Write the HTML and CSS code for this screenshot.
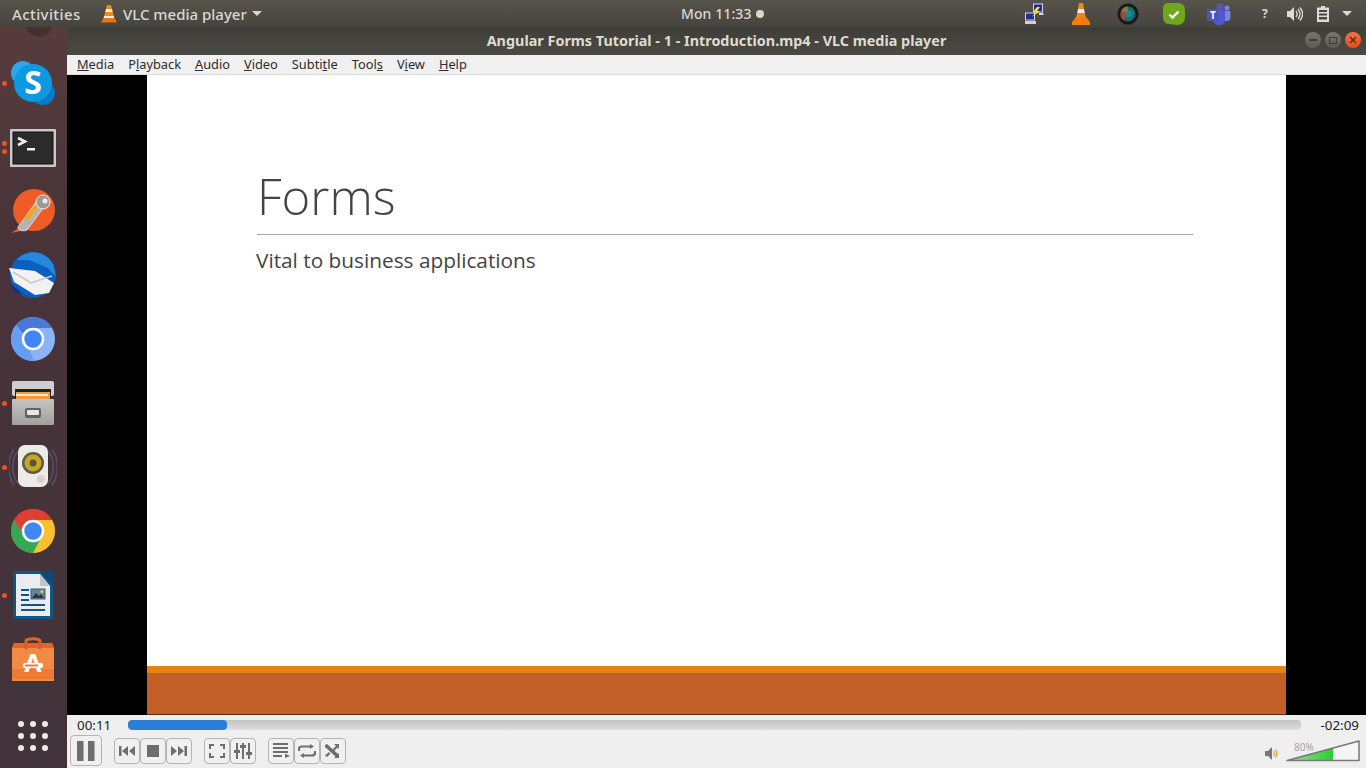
FILE: index.html
```html
<!DOCTYPE html>
<html>
<head>
<meta charset="utf-8">
<title>VLC media player</title>
<link rel="stylesheet" href="styles.css">
</head>

<body>
    <!-- gnome top bar -->
    <header class="topbar">
        <span class="activities">Activities</span>
        <div class="appmenu">
            <svg class="cone-small" width="18" height="20" viewBox="0 0 18 20">
                <path d="M7 1h4l1 4H6z" fill="#ee8a1a"/>
                <path d="M6 5h6l.8 3H5.200z" fill="#eee"/>
                <path d="M5.200 8h7.600l1 4H4.200z" fill="#ee8a1a"/>
                <path d="M4.200 12h9.600l.6 2H3.600z" fill="#eee"/>
                <path d="M3.500 14h11l2 3.500v1H1.500v-1z" fill="#e8750c"/>
            </svg>
            <span>VLC media player</span>
            <i class="caret"></i>
        </div>
        <div class="clock">Mon 11:33<i class="clock-dot"></i></div>
        <div class="tray">
            <svg class="tray-net" width="20" height="22" viewBox="0 0 20 22">
                <rect x="9.500" y="1" width="9" height="8" fill="#1c2fa0" stroke="#d8d8d8"/>
                <rect x="1.500" y="10" width="9" height="7" fill="#1c2fa0" stroke="#d8d8d8"/>
                <rect x="1" y="18" width="11" height="3" fill="#d0d0d0"/>
                <path d="M15 10h4.500v2H15z" fill="#d8d8d8"/>
                <path d="M13 4l-4 5h3l-4 5 8-6h-3l3-4z" fill="#f7ea1c"/>
            </svg>
            <svg class="tray-cone" width="20" height="24" viewBox="0 0 20 24">
                <path d="M8 1h4l1 6H7z" fill="#ee8a1a"/>
                <path d="M7 7h6l.8 4H6.200z" fill="#eee"/>
                <path d="M6.200 11h7.600l1 4H5.200z" fill="#ee8a1a"/>
                <path d="M5 15h10l4 5v3H1v-3z" fill="#ef7d10"/>
            </svg>
            <svg class="tray-lens" width="22" height="22" viewBox="0 0 22 22">
                <circle cx="11" cy="11" r="10.500" fill="#16181a"/>
                <circle cx="11" cy="11" r="7.500" fill="#1d6d63"/>
                <path d="M11 3.500a7.500 7.500 0 0 0-7 5l7 2.500z" fill="#8f7a2e"/>
                <path d="M4 8.500a7.500 7.500 0 0 0 3 9l4-7z" fill="#a8453a"/>
                <circle cx="12" cy="11" r="3.500" fill="#1787a0"/>
            </svg>
            <svg class="tray-check" width="22" height="22" viewBox="0 0 22 22">
                <path d="M6 0h9c5 0 7 3 7 8v6c0 5-3 8-8 8-3 0-5-1-8-1-4 0-6-3-6-7V6c0-4 2-6 6-6z" fill="#6fa81c"/>
                <path d="M6.500 11.500l3 3 6-6" fill="none" stroke="#fff" stroke-width="2.400"/>
            </svg>
            <svg class="tray-teams" width="24" height="22" viewBox="0 0 24 22">
                <circle cx="13" cy="3.500" r="3.500" fill="#5558af"/>
                <circle cx="20" cy="5" r="2.500" fill="#7b83eb"/>
                <path d="M16 8h7.500v7c0 2-2 3-3.500 3H16z" fill="#7b83eb"/>
                <path d="M6 7h12v10c0 3-2.500 5-6 5s-6-2-6-5z" fill="#5059c9"/>
                <rect x="0" y="6" width="12" height="12" rx="1" fill="#4b53bc"/>
                <text class="teams-t" x="6" y="15.500" text-anchor="middle">T</text>
            </svg>
            <span class="tray-help">?</span>
            <svg class="tray-sound" width="16" height="16" viewBox="0 0 16 16">
                <path d="M0 5h3l4-4v14l-4-4H0z" fill="#dcdcd8"/>
                <path d="M9 5c1.300 1.800 1.300 4.200 0 6M11 3c2.400 3 2.400 7 0 10M13 1.500c3.200 4 3.200 9 0 13" fill="none" stroke="#dcdcd8" stroke-width="1.300"/>
            </svg>
            <svg class="tray-batt" width="12" height="16" viewBox="0 0 12 16">
                <path d="M4 0h4v1.500h4V16H0V1.500h4z" fill="#dcdcd8"/>
                <path d="M2 4h8v2H2zM2 7.500h8v2H2zM2 11h8v2.500H2z" fill="#4a4842"/>
            </svg>
            <i class="caret"></i>
        </div>
    </header>

    <div class="desktop">
        <!-- launcher -->
        <nav class="dock">
            <div class="dock-peek"><i class="peek-shape"></i></div>

            <div class="dock-item running">
                <svg width="44" height="44" viewBox="0 0 44 44">
                    <circle cx="12" cy="12" r="12" fill="#2aa9e8"/>
                    <circle cx="32" cy="32" r="12" fill="#0a78c8"/>
                    <circle cx="22" cy="22" r="19" fill="#0d98e2"/>
                    <text class="skype-s" x="22" y="33" text-anchor="middle">S</text>
                </svg>
            </div>

            <div class="dock-item running two">
                <svg class="term-icon" width="46" height="38" viewBox="0 0 46 38">
                    <rect width="46" height="38" rx="1" fill="#c9c9c7"/>
                    <rect x="3" y="3" width="40" height="32" fill="#2b2b2b" stroke="#111"/>
                    <path d="M8 9l7 3.500L8 16" fill="none" stroke="#eee" stroke-width="2.600"/>
                    <rect x="17" y="19" width="8" height="2.500" fill="#eee"/>
                </svg>
            </div>

            <div class="dock-item">
                <svg width="44" height="44" viewBox="0 0 44 44">
                    <circle cx="23" cy="21" r="21" fill="#ef5b25"/>
                    <path d="M0 44l11-7 4 4z" fill="#ef5b25"/>
                    <path d="M7 38L25 13l8 5-17 23c-3 2-10 0-9-3z" fill="#b4b4b4" stroke="#f0e8e0" stroke-width=".8"/>
                    <path d="M13 29l13-15 3 2-12 15z" fill="#f3a51f"/>
                    <circle cx="32" cy="13" r="7" fill="#9a9a9a" stroke="#eee"/>
                    <circle cx="34" cy="12" r="2.500" fill="#eee"/>
                </svg>
            </div>

            <div class="dock-item">
                <svg width="48" height="48" viewBox="0 0 48 48">
                    <circle cx="24" cy="24" r="23" fill="#0a5fc0"/>
                    <path d="M8 9C16-1 34-3 44 13l3 13-8-9L20 9z" fill="#2488de"/>
                    <path d="M0 17l26 3 19 12-5 10-14 2L5 31z" fill="#f2f2f2"/>
                    <path d="M4 21l18 11 21-7" fill="none" stroke="#c8c8cc" stroke-width="1.500"/>
                    <path d="M2 33l13 11 12 3-21-6z" fill="#1c2a80"/>
                </svg>
            </div>

            <div class="dock-item">
                <svg width="44" height="44" viewBox="0 0 44 44">
                    <circle cx="22" cy="22" r="22" fill="#8ab4f8"/>
                    <path d="M22 0a22 22 0 0 1 19 11H22a11 11 0 0 0-10 6L5 8a22 22 0 0 1 17-8z" fill="#4a78d6"/>
                    <path d="M5 8l10 17 8 19A22 22 0 0 1 5 8z" fill="#669df6"/>
                    <circle cx="22" cy="22" r="10" fill="#4285f4" stroke="#fff" stroke-width="2.500"/>
                </svg>
            </div>

            <div class="dock-item running">
                <svg width="44" height="44" viewBox="0 0 44 44">
                    <defs>
                        <linearGradient id="drawerGrad" x1="0" x2="0" y1="0" y2="1">
                            <stop offset="0" stop-color="#c4c4c2"/>
                            <stop offset="1" stop-color="#a0a09e"/>
                        </linearGradient>
                    </defs>
                    <rect x="1" y="0" width="42" height="15" rx="2" fill="#cfcfcf"/>
                    <rect x="4" y="8" width="36" height="13" fill="#222"/>
                    <rect x="5" y="11" width="34" height="9" fill="#ec9b3e"/>
                    <rect x="5" y="13" width="32" height="2" fill="#fbe7c6"/>
                    <rect x="1" y="18" width="42" height="26" rx="1" fill="url(#drawerGrad)"/>
                    <rect x="14" y="27" width="16" height="10" rx="2" fill="#65625e"/>
                    <rect x="16" y="29" width="12" height="5" rx="1" fill="#e6e6e6"/>
                </svg>
            </div>

            <div class="dock-item running">
                <svg width="48" height="44" viewBox="0 0 48 44">
                    <path d="M9 6C2 14 2 30 9 38M5 4c-7 10-7 26 0 36M39 6c7 8 7 24 0 32M43 4c7 10 7 26 0 36" fill="none" stroke="#5a5068" stroke-width="1.500"/>
                    <rect x="9" y="0" width="30" height="42" rx="7" fill="#ecebe6"/>
                    <circle cx="24" cy="18" r="11" fill="#5b5a52"/>
                    <circle cx="24" cy="18" r="8.500" fill="#c8a818"/>
                    <circle cx="24" cy="18" r="3.500" fill="#55534a"/>
                    <circle cx="32" cy="34" r="4" fill="#d4d3ce"/>
                </svg>
            </div>

            <div class="dock-item">
                <svg width="44" height="44" viewBox="0 0 44 44">
                    <circle cx="22" cy="22" r="22" fill="#ea4335"/>
                    <path d="M22 44A22 22 0 0 0 41 11H22l-9 17z" fill="#fbc02d"/>
                    <path d="M3 11a22 22 0 0 0 19 33l9-17-18 0z" fill="#34a853"/>
                    <path d="M22 0A22 22 0 0 1 41 11H22a11 11 0 0 0-10 7L3 11A22 22 0 0 1 22 0z" fill="#dd3f33"/>
                    <circle cx="22" cy="22" r="10" fill="#4285f4" stroke="#fff" stroke-width="2.500"/>
                </svg>
            </div>

            <div class="dock-item running">
                <svg width="40" height="48" viewBox="0 0 40 48">
                    <rect width="40" height="48" rx="2" fill="#0f5586"/>
                    <path d="M3 3h24l10 12v30H3z" fill="#e9edef"/>
                    <path d="M27 0l13 0v15z" fill="#0a4a78"/>
                    <path d="M27 3v12h10z" fill="#bcc6cc"/>
                    <path d="M8 18h8v2H8zM8 23h8v2H8zM8 28h8v2H8zM8 33h24v2H8zM8 38h24v2H8z" fill="#0f5586"/>
                    <rect x="18" y="18" width="14" height="10" fill="#5d87a3" stroke="#556"/>
                    <circle cx="29" cy="20.500" r="1.500" fill="#e6c84a"/>
                    <path d="M19 27l4-5 3 3 2-2 3 4z" fill="#333"/>
                </svg>
            </div>

            <div class="dock-item">
                <svg width="42" height="44" viewBox="0 0 42 44">
                    <path d="M14 12V4c0-3 14-3 14 0v8" fill="none" stroke="#e2622a" stroke-width="3"/>
                    <path d="M2 6h38l2 6v32H0V12z" fill="#f08a44"/>
                    <rect y="32" width="42" height="10" fill="#ee7a33"/>
                    <path d="M2 6h38l2 5H0z" fill="#e2662c"/>
                    <path d="M14 6v6M28 6v6" stroke="#d85a24" stroke-width="3"/>
                    <text class="store-a" x="21" y="35" text-anchor="middle">A</text>
                    <rect x="11" y="26" width="20" height="5" rx="2" fill="#fff"/>
                    <rect x="13" y="27.500" width="13" height="2" fill="#ee7a33"/>
                </svg>
            </div>

            <div class="dock-grid">
                <i></i><i></i><i></i>
                <i></i><i></i><i></i>
                <i></i><i></i><i></i>
            </div>
        </nav>

        <!-- vlc window -->
        <main class="window">
            <div class="titlebar">
                <span class="title">Angular Forms Tutorial - 1 - Introduction.mp4 - VLC media player</span>
                <div class="win-buttons">
                    <span class="win-btn"><i class="win-min"></i></span>
                    <span class="win-btn"><i class="win-max"></i></span>
                    <span class="win-btn close">
                        <svg width="8" height="8" viewBox="0 0 8 8"><path d="M1 1l6 6M7 1l-6 6" stroke="#5a2410" stroke-width="1.300"/></svg>
                    </span>
                </div>
            </div>

            <div class="menubar">
                <span><u>M</u>edia</span>
                <span>P<u>l</u>ayback</span>
                <span><u>A</u>udio</span>
                <span><u>V</u>ideo</span>
                <span>Subti<u>t</u>le</span>
                <span>Tool<u>s</u></span>
                <span>V<u>i</u>ew</span>
                <span><u>H</u>elp</span>
            </div>

            <div class="video">
                <div class="slide">
                    <div class="slide-body">
                        <h1 class="slide-title">Forms</h1>
                        <p class="slide-sub">Vital to business applications</p>
                    </div>
                    <div class="slide-strip"></div>
                    <div class="slide-foot"></div>
                </div>
            </div>

            <div class="controls">
                <div class="seek-row">
                    <span class="time">00:11</span>
                    <div class="seek"><div class="seek-fill"></div></div>
                    <span class="time remain">-02:09</span>
                </div>
                <div class="button-row">
                    <button class="ctl big">
                        <svg width="18" height="20" viewBox="0 0 18 20"><path d="M0 0h6.500v20H0zM11 0h6.500v20H11z" fill="#6e6e6e"/></svg>
                    </button>
                    <div class="ctl-group">
                        <button class="ctl">
                            <svg width="16" height="12" viewBox="0 0 16 12"><path d="M0 1h2.500v10H0zM9 1v10L3 6zM16 1v10L10 6z" fill="#6e6e6e"/></svg>
                        </button>
                        <button class="ctl">
                            <svg width="12" height="12" viewBox="0 0 12 12"><rect width="12" height="12" fill="#6e6e6e"/></svg>
                        </button>
                        <button class="ctl">
                            <svg width="16" height="12" viewBox="0 0 16 12"><path d="M16 1h-2.500v10H16zM7 1v10l6-5zM0 1v10l6-5z" fill="#6e6e6e"/></svg>
                        </button>
                    </div>
                    <div class="ctl-group">
                        <button class="ctl">
                            <svg width="16" height="14" viewBox="0 0 16 14"><path d="M0 5V0h5v2H2v3zM11 0h5v5h-2V2h-3zM16 9v5h-5v-2h3V9zM5 14H0V9h2v3h3z" fill="#6e6e6e"/></svg>
                        </button>
                        <button class="ctl">
                            <svg width="18" height="16" viewBox="0 0 18 16"><path d="M2 0h2v7h2v3H4v6H2v-6H0V7h2zM8 0h2v2h2v3h-2v11H8V5H6V2h2zM14 0h2v9h2v3h-2v4h-2v-4h-2V9h2z" fill="#6e6e6e"/></svg>
                        </button>
                    </div>
                    <div class="ctl-group">
                        <button class="ctl">
                            <svg width="17" height="15" viewBox="0 0 17 15"><path d="M0 0h15v2H0zM0 4h15v2H0zM0 8h15v2H0zM0 12h9v2H0zM12 10.500l5 2.500-5 2z" fill="#6e6e6e"/></svg>
                        </button>
                        <button class="ctl">
                            <svg width="18" height="14" viewBox="0 0 18 14"><path d="M1 7V5c0-1.500 1-2.500 3-2.500h9M17 7v2c0 1.500-1 2.500-3 2.500H5" fill="none" stroke="#6e6e6e" stroke-width="2.200"/><path d="M12 0l4 2.500-4 2.500zM6 9v5l-4-2.500z" fill="#6e6e6e"/></svg>
                        </button>
                        <button class="ctl">
                            <svg width="16" height="14" viewBox="0 0 16 14"><path d="M0 1l2-1 11 10 1-1v5H9l1.500-1.500L0 3zM9 0h5v5l-1.500-1.500L9 7 7.500 5.500 11 2zM0 11.500L4 8l1.500 1.500L2 13z" fill="#6e6e6e"/></svg>
                        </button>
                    </div>
                    <div class="volume">
                        <svg class="vol-icon" width="13" height="13" viewBox="0 0 13 13">
                            <path d="M0 4h3l4-4v13L3 9H0z" fill="#777"/>
                            <path d="M8.500 4c1 1.500 1 3.500 0 5M10.500 2.500c1.800 2.500 1.800 5.500 0 8" fill="none" stroke="#e8912a" stroke-width="1.200"/>
                        </svg>
                        <div class="vol-slider">
                            <svg width="74" height="22" viewBox="0 0 74 22">
                                <defs>
                                    <linearGradient id="volGrad" x1="0" x2="1" y1="0" y2="0">
                                        <stop offset="0" stop-color="#a8dca0"/>
                                        <stop offset="1" stop-color="#27cf2c"/>
                                    </linearGradient>
                                </defs>
                                <path d="M1 20.500L73 1v19.500z" fill="#f5f5f5"/>
                                <path d="M1 20.500L47 8v12.500z" fill="url(#volGrad)"/>
                                <path d="M1 20.500L73 1v19.500z" fill="none" stroke="#777" stroke-width="1.500" stroke-linejoin="round"/>
                            </svg>
                            <span class="vol-label">80%</span>
                        </div>
                    </div>
                </div>
            </div>
        </main>
    </div>
</body>

</html>
```

FILE: styles.css
```css
* {
    box-sizing: border-box;
}

html, body {
    height: 100%;
}

body {
    margin: 0;
    overflow: hidden;
    display: flex;
    flex-direction: column;
    font-family: "Noto Sans", "Open Sans", sans-serif;
    background-color: #3f3d37;
}

.topbar {
    height: 27px;
    flex: none;
    position: relative;
    display: flex;
    align-items: center;
    padding-left: 12px;
    background-image: linear-gradient(180deg, #57544c 0%, #46443e 100%);
    color: #d9d8d3;
    font-size: 15px;
    font-weight: 500;
}

.activities {
    width: 88px;
    white-space: nowrap;
    letter-spacing: .4px;
}

.appmenu {
    display: flex;
    align-items: center;
}

.cone-small {
    margin-right: 5px;
}

.caret {
    display: block;
    width: 0;
    height: 0;
    margin-left: 5px;
    border-left: 5px solid transparent;
    border-right: 5px solid transparent;
    border-top: 5px solid #d9d8d3;
}

.clock {
    position: absolute;
    left: 681px;
    top: 4px;
    display: flex;
    align-items: center;
    white-space: nowrap;
    font-size: 14px;
    letter-spacing: .1px;
}

.clock-dot {
    width: 8px;
    height: 8px;
    margin-left: 4px;
    border-radius: 50%;
    background-color: #d9d8d3;
}

.tray {
    margin-left: auto;
    display: flex;
    align-items: center;
    padding-right: 14px;
    height: 100%;
}

.tray-net { margin-right: 27px; }
.tray-cone { margin-right: 26px; }
.tray-lens { margin-right: 24px; }
.tray-check { margin-right: 22px; }
.tray-teams { margin-right: 31px; }

.tray-help {
    width: 10px;
    margin-right: 15px;
    font-size: 12px;
    font-weight: 700;
}

.tray-sound { margin-right: 14px; }
.tray-batt { margin-right: 8px; }

.teams-t {
    font-family: "Noto Sans", sans-serif;
    font-size: 10px;
    font-weight: 700;
    fill: #fff;
}

.desktop {
    flex: 1;
    min-height: 0;
    display: flex;
}

.dock {
    width: 67px;
    flex: none;
    display: flex;
    flex-direction: column;
    background-image: linear-gradient(180deg, #573c3d 0%, #483339 30%, #42333a 100%);
}

.dock-peek {
    height: 24px;
    overflow: hidden;
    position: relative;
}

.peek-shape {
    position: absolute;
    left: 26px;
    top: -14px;
    width: 26px;
    height: 24px;
    border-radius: 50%;
    background-color: #46302f;
}

.dock-item {
    height: 64px;
    flex: none;
    position: relative;
    display: flex;
    align-items: center;
    justify-content: center;
    padding-right: 2px;
}

.dock-item svg {
    display: block;
}

.dock-item .term-icon {
    margin-top: 2px;
}

.running::before {
    content: "";
    position: absolute;
    left: 2px;
    top: 30px;
    width: 5px;
    height: 5px;
    border-radius: 50%;
    background-color: #e95420;
}

.running.two::before {
    top: 26px;
    box-shadow: 0 8px 0 #e95420;
}

.skype-s {
    font-family: "Noto Sans", sans-serif;
    font-size: 32px;
    font-weight: 700;
    fill: #fff;
}

.store-a {
    font-family: "Noto Sans", sans-serif;
    font-size: 25px;
    font-weight: 700;
    fill: #fff;
}

.dock-grid {
    display: grid;
    grid-template-columns: repeat(3, 6px);
    gap: 6px;
    justify-content: center;
    margin-top: 30px;
    padding-right: 2px;
}

.dock-grid i {
    width: 6px;
    height: 6px;
    border-radius: 50%;
    background-color: #ecebe8;
}

.window {
    flex: 1;
    min-width: 0;
    display: flex;
    flex-direction: column;
}

.titlebar {
    height: 28px;
    flex: none;
    position: relative;
    display: flex;
    align-items: center;
    justify-content: center;
    padding-bottom: 2px;
    background-image: linear-gradient(180deg, #3f3d37 0%, #4c4a44 100%);
    color: #dfdbd2;
    font-size: 14.400px;
    font-weight: 700;
}

.title {
    white-space: nowrap;
}

.win-buttons {
    position: absolute;
    right: 5px;
    top: 5px;
    display: flex;
    gap: 4px;
}

.win-btn {
    width: 16px;
    height: 16px;
    border-radius: 50%;
    display: flex;
    align-items: center;
    justify-content: center;
    background-image: linear-gradient(180deg, #77756f 0%, #5d5b55 100%);
}

.win-btn.close {
    background-image: linear-gradient(180deg, #f0763f 0%, #df4e1c 100%);
}

.win-min {
    width: 8px;
    height: 2px;
    background-color: #3d3b36;
}

.win-max {
    width: 8px;
    height: 7px;
    border: 1px solid #3d3b36;
}

.menubar {
    height: 20px;
    flex: none;
    display: flex;
    align-items: center;
    gap: 14px;
    padding: 0 0 2px 10px;
    background-color: #f0f0f0;
    border-bottom: 1px solid #dcdcdc;
    color: #2c2c2c;
    font-size: 12.800px;
}

.video {
    flex: 1;
    min-height: 0;
    display: flex;
    justify-content: center;
    background-color: #000;
}

.slide {
    width: 1139px;
    display: flex;
    flex-direction: column;
    background-color: #fff;
}

.slide-body {
    flex: 1;
    padding: 91px 93px 0 110px;
    color: #444;
}

.slide-title {
    margin: 0;
    height: 69px;
    border-bottom: 1px solid #a6a6a6;
    font-family: "Open Sans", sans-serif;
    font-size: 49px;
    font-weight: 300;
    line-height: 60px;
}

.slide-sub {
    margin: 10px 0 0 -1px;
    font-family: "Open Sans", sans-serif;
    font-size: 20.800px;
    line-height: 30px;
}

.slide-strip {
    height: 7px;
    flex: none;
    background-color: #e48312;
}

.slide-foot {
    height: 42px;
    flex: none;
    background-color: #c15f27;
    border-bottom: 1px solid #5c2a10;
}

.controls {
    height: 53px;
    flex: none;
    display: flex;
    flex-direction: column;
    background-color: #efefef;
}

.seek-row {
    height: 20px;
    flex: none;
    display: flex;
    align-items: center;
    padding: 0 7px 0 10px;
    color: #222;
    font-size: 13.400px;
}

.time {
    width: 51px;
}

.time.remain {
    width: auto;
    margin-left: 19px;
}

.seek {
    flex: 1;
    height: 10px;
    border-radius: 4px;
    overflow: hidden;
    background-image: linear-gradient(180deg, #c3c3c3 0%, #dedede 100%);
}

.seek-fill {
    width: 99px;
    height: 100%;
    border-radius: 4px;
    background-color: #2a7fd6;
}

.button-row {
    flex: 1;
    display: flex;
    align-items: center;
    gap: 12px;
    padding: 0 0 2px 3px;
}

.ctl-group {
    display: flex;
}

.ctl {
    width: 26px;
    height: 26px;
    padding: 0;
    display: flex;
    align-items: center;
    justify-content: center;
    background-color: #f0f0f0;
    border: 1px solid #b4b4b4;
    border-radius: 4px;
}

.ctl.big {
    width: 32px;
    height: 31px;
}

.volume {
    margin-left: auto;
    display: flex;
    align-items: flex-end;
    padding-right: 6px;
}

.vol-icon {
    margin-right: 8px;
    margin-bottom: 2px;
}

.vol-slider {
    position: relative;
    display: flex;
}

.vol-label {
    position: absolute;
    left: 8px;
    top: 0;
    color: #a4a4a4;
    font-size: 10px;
}
```
